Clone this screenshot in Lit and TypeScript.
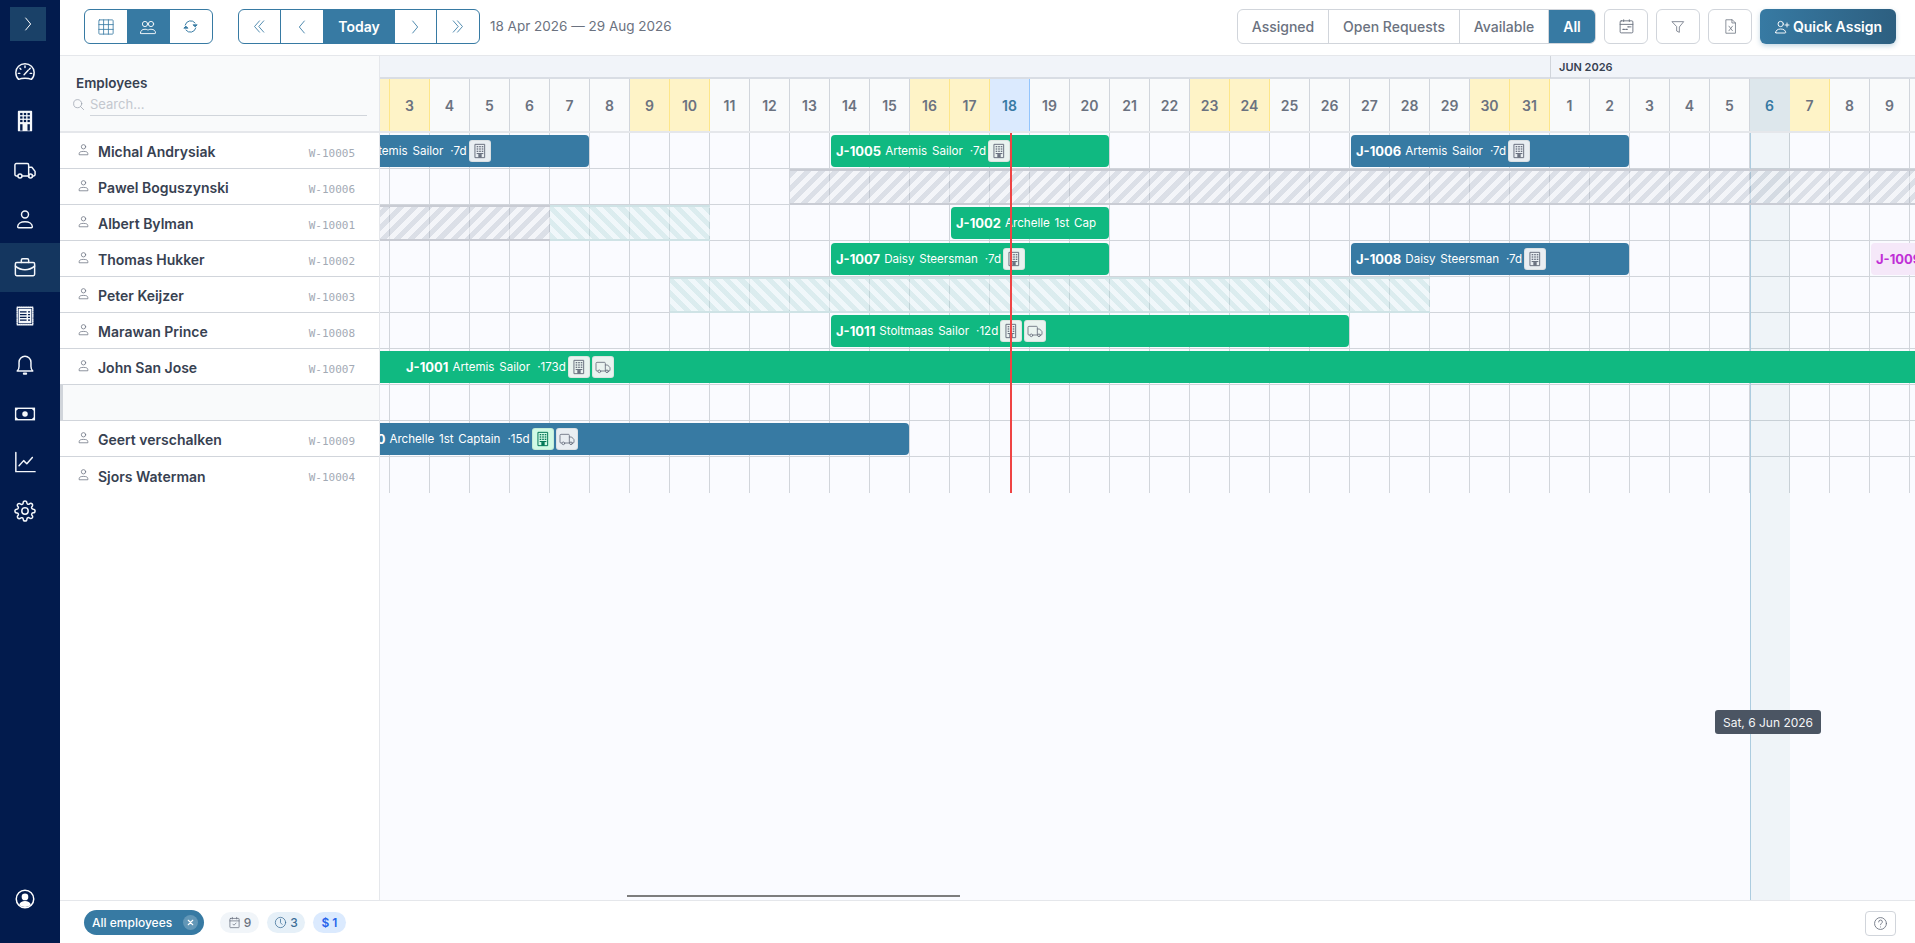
import { LitElement, html, css, svg } from "lit";
import { customElement } from "lit/decorators.js";

const ic = (body: unknown, size = 16, sw = 1.5) => html`<svg width=${size} height=${size} viewBox="0 0 24 24" fill="none" stroke="currentColor" stroke-width=${sw} stroke-linecap="round" stroke-linejoin="round">${body}</svg>`;

const I = {
  gauge: svg`<path d="M5 20c-2-1.800-3-4.500-3-7.500a10 9.500 0 0 1 20 0c0 3-1 5.700-3 7.500-2-.9-4.400-1.300-7-1.300s-5 .4-7 1.300z"/><path d="M12 5.500v1.500M6.500 8l1 1M4.800 13.500h1.500M17.700 8l-1 1M19.200 13.500h-1.500M11 15l4.500-5"/>`,
  building: svg`<rect x="5" y="1.500" width="14" height="21" fill="currentColor" stroke="currentColor"/><g fill="#021b4d" stroke="none"><rect x="6.700" y="3.200" width="2.600" height="2.400"/><rect x="10.700" y="3.200" width="2.600" height="2.400"/><rect x="14.700" y="3.200" width="2.600" height="2.400"/><rect x="6.700" y="7" width="2.600" height="2.400"/><rect x="10.700" y="7" width="2.600" height="2.400"/><rect x="14.700" y="7" width="2.600" height="2.400"/><rect x="6.700" y="10.800" width="2.600" height="2.400"/><rect x="10.700" y="10.800" width="2.600" height="2.400"/><rect x="14.700" y="10.800" width="2.600" height="2.400"/><rect x="6.700" y="15.500" width="2.600" height="7"/><rect x="14.700" y="15.500" width="2.600" height="7"/></g>`,
  truck: svg`<path d="M4 18.500H2.500a1.500 1.500 0 0 1-1.500-1.500V6.500A1.500 1.500 0 0 1 2.500 5h12A1.500 1.500 0 0 1 16 6.500v12H9"/><path d="M16 9h3.500l3.500 4.500v3.500a1.500 1.500 0 0 1-1.500 1.500H20M16 18.500h.5"/><circle cx="6.500" cy="18.500" r="2.200"/><circle cx="18" cy="18.500" r="2.200"/>`,
  person: svg`<circle cx="12" cy="7" r="3.800"/><path d="M4 20.500c0-3.500 3.500-5.500 8-5.500s8 2 8 5.500c0 .5-.4 1-1 1H5c-.6 0-1-.5-1-1z"/>`,
  briefcase: svg`<rect x="1.500" y="7" width="21" height="14.500" rx="1.500"/><path d="M8 7V4.500A1.500 1.500 0 0 1 9.500 3h5A1.500 1.500 0 0 1 16 4.500V7M1.500 11c3 2.500 6.500 4 10.500 4s7.500-1.500 10.500-4"/>`,
  invoice: svg`<rect x="3.500" y="2.500" width="17" height="19" stroke-dasharray="1 1"/><rect x="5" y="4" width="14" height="16" fill="currentColor" stroke="none"/><path d="M6.500 7.500h11M6.500 10.500h11M6.500 13.500h11M6.500 16.500h11" stroke="#021b4d" stroke-linecap="butt"/><path d="M14.500 6.500v11" stroke="currentColor"/>`,
  bell: svg`<path d="M12 2.500a6.500 6.500 0 0 0-6.500 6.500v4.500c0 2.500-1.500 4.500-2 5h17c-.5-.5-2-2.500-2-5V9A6.500 6.500 0 0 0 12 2.500z"/><path d="M10.800 21.500h2.400" stroke-width="2.400"/>`,
  cash: svg`<rect x="1" y="5" width="22" height="14" fill="currentColor" stroke="none"/><path d="M2.500 8.500l2-2h15l2 2v7l-2 2h-15l-2-2z" fill="#021b4d" stroke="none"/><circle cx="12" cy="12" r="3" fill="currentColor" stroke="none"/>`,
  chart: svg`<path d="M2 1.500v21h21M5.500 16l5-5.500 3.500 3.500 6-7"/>`,
  gear: svg`<circle cx="12" cy="12" r="3.500"/><path d="M19.400 15a1.650 1.650 0 0 0 .33 1.820l.06.06a2 2 0 0 1 0 2.830 2 2 0 0 1-2.830 0l-.06-.06a1.650 1.650 0 0 0-1.820-.33 1.650 1.650 0 0 0-1 1.510V21a2 2 0 0 1-2 2 2 2 0 0 1-2-2v-.09A1.650 1.650 0 0 0 9 19.400a1.650 1.650 0 0 0-1.820.33l-.06.06a2 2 0 0 1-2.830 0 2 2 0 0 1 0-2.830l.06-.06a1.650 1.650 0 0 0 .33-1.820 1.650 1.650 0 0 0-1.510-1H3a2 2 0 0 1-2-2 2 2 0 0 1 2-2h.09A1.650 1.650 0 0 0 4.600 9a1.650 1.650 0 0 0-.33-1.820l-.06-.06a2 2 0 0 1 0-2.830 2 2 0 0 1 2.830 0l.06.06a1.650 1.650 0 0 0 1.820.33H9a1.650 1.650 0 0 0 1-1.510V3a2 2 0 0 1 2-2 2 2 0 0 1 2 2v.09a1.650 1.650 0 0 0 1 1.510 1.650 1.650 0 0 0 1.820-.33l.06-.06a2 2 0 0 1 2.830 0 2 2 0 0 1 0 2.830l-.06.06a1.650 1.650 0 0 0-.33 1.820V9a1.650 1.650 0 0 0 1.510 1H21a2 2 0 0 1 2 2 2 2 0 0 1-2 2h-.09a1.650 1.650 0 0 0-1.510 1z"/>`,
  userCircle: svg`<circle cx="12" cy="12" r="10.500" stroke-width="1.800"/><circle cx="12" cy="9.500" r="4" fill="currentColor" stroke="none"/><path d="M5 19c1-3 3.500-4.500 7-4.500s6 1.500 7 4.500c-2 1.800-4.400 2.700-7 2.700S7 20.800 5 19z" fill="currentColor" stroke="none"/>`,
  chevR: svg`<path d="M8.500 3l7.500 9-7.500 9"/>`,
  chevL: svg`<path d="M15.500 3L8 12l7.500 9"/>`,
  dblL: svg`<path d="M12 4l-7 8 7 8M18 4l-7 8 7 8"/>`,
  dblR: svg`<path d="M6 4l7 8-7 8M12 4l7 8-7 8"/>`,
  table: svg`<rect x="2.500" y="2.500" width="19" height="19" rx="1"/><path d="M8.800 2.500v19M15.200 2.500v19M2.500 8.800h19M2.500 15.200h19"/>`,
  users: svg`<circle cx="8" cy="8" r="3.500"/><circle cx="16" cy="8" r="3.500"/><path d="M2 20c0-3 2-5 6-5 2 0 3.200.5 4 1.400.8-.9 2-1.400 4-1.400 4 0 6 2 6 5 0 .5-.3.8-.8.8H2.800c-.5 0-.8-.3-.8-.8z"/>`,
  sync: svg`<path d="M4.500 10a8 8 0 0 1 14-3M19.500 14a8 8 0 0 1-14 3"/><path d="M21 10l-2.500 2.500L16 10z" fill="currentColor"/><path d="M3 14l2.500-2.500L8 14z" fill="currentColor"/>`,
  calendar: svg`<rect x="3" y="4" width="18" height="17" rx="1.500"/><path d="M3 9h18M8 2.500V5M16 2.500V5" /><path d="M7 16h2M11 16h2M14 12.500h2M18 12.500h.1" stroke-width="2"/>`,
  filter: svg`<path d="M3.500 4h17l-6.500 8v8l-4-2v-6z"/>`,
  excel: svg`<path d="M6 2.500h8.500l4.500 4.500v14.500H6zM14 2.500V7h5"/><path d="M9.800 11.500l5 6.500M14.800 11.500l-5 6.500"/>`,
  userPlus: svg`<circle cx="10" cy="7.500" r="4"/><path d="M2.500 20.500c0-3.500 3-5.500 7.500-5.500s7.500 2 7.500 5.500c0 .3-.2.5-.5.5H3c-.3 0-.5-.2-.5-.5zM19.500 6v6M16.500 9h6"/>`,
  search: svg`<circle cx="10.500" cy="10.500" r="7.500"/><path d="M16 16l5.500 5.500"/>`,
  rowPerson: svg`<circle cx="12" cy="7" r="4"/><path d="M4 21v-1.500c0-2.500 2.500-4 8-4s8 1.500 8 4V21zM4 21"/>`,
  calCheck: svg`<rect x="3.500" y="4.500" width="17" height="17" rx="1"/><path d="M3.500 9h17M8 2.500v3M16 2.500v3M9 15l2 2 4-4"/>`,
  clock: svg`<circle cx="12" cy="12" r="9.500"/><path d="M12 6v6.500l3 3"/>`,
  help: svg`<circle cx="12" cy="12" r="9.500"/><path d="M9 9.500a3 3 0 0 1 6 0c0 2-3 2.300-3 4.500M12 17.500v.1"/>`,
  close: svg`<path d="M6 6l12 12M18 6L6 18"/>`,
  bldSmall: svg`<rect x="5" y="2" width="14" height="20" stroke="currentColor" stroke-width="1.500"/><g fill="currentColor" stroke="none"><rect x="7" y="4.500" width="2.400" height="2"/><rect x="10.800" y="4.500" width="2.400" height="2"/><rect x="14.600" y="4.500" width="2.400" height="2"/><rect x="7" y="8" width="2.400" height="2"/><rect x="10.800" y="8" width="2.400" height="2"/><rect x="14.600" y="8" width="2.400" height="2"/><rect x="7" y="11.500" width="2.400" height="2"/><rect x="10.800" y="11.500" width="2.400" height="2"/><rect x="14.600" y="11.500" width="2.400" height="2"/><rect x="7" y="15" width="10" height="1.600"/><rect x="9.500" y="16.600" width="5" height="5.400"/></g>`,
  truckSmall: svg`<path d="M4 18H3a1.500 1.500 0 0 1-1.500-1.500v-10A1.500 1.500 0 0 1 3 5h11a1.500 1.500 0 0 1 1.500 1.500V18H9"/><path d="M15.500 9H19l3.500 4v3.500A1.500 1.500 0 0 1 21 18h-1M15.500 18h.5"/><circle cx="6.500" cy="18.500" r="2"/><circle cx="18" cy="18.500" r="2"/>`,
};

const COL_COUNT = 42;
const TODAY = 18;
const HOVER = 37;
const FIRST_LABEL = 3;
const LAST_LABEL = 40;

interface Day { n: number; weekend: boolean; }
const days: Day[] = Array.from({ length: COL_COUNT }, (_, i) => {
  const d = new Date(Date.UTC(2026, 3, 30 + i));
  const wd = d.getUTCDay();
  return { n: d.getUTCDate(), weekend: wd === 0 || wd === 6 };
});

type Item =
  | { kind: "bar"; id: string; text?: string; dur?: string; start: number; span: number; color: "green" | "blue" | "purple"; chips?: ("b" | "t" | "bg")[]; pad?: number }
  | { kind: "hatch"; tone: "grey" | "teal"; start: number; span: number };

interface Row { name?: string; code?: string; items: Item[]; }

const bar = (id: string, text: string, dur: string, start: number, span: number, color: "green" | "blue" | "purple", chips: ("b" | "t" | "bg")[] = [], pad?: number): Item => ({ kind: "bar", id, text, dur, start, span, color, chips, pad });
const hatch = (tone: "grey" | "teal", start: number, span: number): Item => ({ kind: "hatch", tone, start, span });

const rows: Row[] = [
  { name: "Michal Andrysiak", code: "W-10005", items: [bar("J-1004", "Artemis Sailor", "7d", 1, 7, "blue", ["b"]), bar("J-1005", "Artemis Sailor", "7d", 14, 7, "green", ["b"]), bar("J-1006", "Artemis Sailor", "7d", 27, 7, "blue", ["b"])] },
  { name: "Pawel Boguszynski", code: "W-10006", items: [hatch("grey", 13, 29)] },
  { name: "Albert Bylman", code: "W-10001", items: [hatch("grey", 0, 7), hatch("teal", 7, 4), bar("J-1002", "Archelle 1st Cap", "", 17, 4, "green")] },
  { name: "Thomas Hukker", code: "W-10002", items: [bar("J-1007", "Daisy Steersman", "7d", 14, 7, "green", ["b"]), bar("J-1008", "Daisy Steersman", "7d", 27, 7, "blue", ["b"]), bar("J-1009", "", "", 40, 2, "purple")] },
  { name: "Peter Keijzer", code: "W-10003", items: [hatch("teal", 10, 19)] },
  { name: "Marawan Prince", code: "W-10008", items: [bar("J-1011", "Stoltmaas Sailor", "12d", 14, 13, "green", ["b", "t"])] },
  { name: "John San Jose", code: "W-10007", items: [bar("J-1001", "Artemis Sailor", "173d", 0, 42, "green", ["b", "t"], 135)] },
  { items: [] },
  { name: "Geert verschalken", code: "W-10009", items: [bar("J-1010", "Archelle 1st Captain", "15d", 1, 15, "blue", ["bg", "t"], 32)] },
  { name: "Sjors Waterman", code: "W-10004", items: [] },
];

const navIcons = [I.gauge, I.building, I.truck, I.person, I.briefcase, I.invoice, I.bell, I.cash, I.chart, I.gear];

@customElement("app-root")
export class AppRoot extends LitElement {
  static styles = css`
    :host { display: grid; grid-template-columns: 60px 1fr; height: 943px; width: 1915px; overflow: hidden; font-family: Inter, "Noto Sans", sans-serif; color: #374151; background: #fff; }
    svg { display: block; flex: none; }
    .side { background: #021b4d; color: #fff; display: flex; flex-direction: column; }
    .toggle { width: 36px; height: 34px; margin: 7px 0 7px 10px; background: #1a4168; display: flex; align-items: center; justify-content: center; }
    .nav { height: 48.75px; display: flex; align-items: center; padding-left: 14px; color: #f4f7fb; }
    .nav.on { background: #14365f; }
    .navuser { margin-top: auto; margin-bottom: 34px; padding-left: 15px; color: #fff; }
    .main { display: flex; flex-direction: column; min-width: 0; }
    .top { height: 56px; box-sizing: border-box; border-bottom: 1px solid #e5e7eb; display: flex; align-items: flex-start; padding: 9px 19px 0 24px; }
    .seg { display: flex; height: 35px; border: 1px solid #377aa3; border-radius: 6px; overflow: hidden; box-sizing: border-box; background: #fff; }
    .seg .b { display: flex; align-items: center; justify-content: center; color: #377aa3; }
    .seg .on { background: #377aa3; color: #fff; }
    .g1 .b { width: 42.330px; }
    .g2 { margin-left: 25px; }
    .g2 .b { width: 42px; border-right: 1px solid #377aa3; box-sizing: border-box; }
    .g2 .b.t { width: 72px; font-size: 14px; font-weight: 600; border-right: 0; }
    .g2 .b:last-child { border-right: 0; }
    .g2 .b.p { border-right: 0; }
    .range { margin-left: 10px; font-size: 13.500px; color: #6b7280; line-height: 35px; }
    .filters { margin-left: auto; display: flex; height: 35px; border: 1px solid #d1d5db; border-radius: 6px; overflow: hidden; box-sizing: border-box; font-size: 14px; font-weight: 500; color: #6b7280; }
    .filters div { display: flex; align-items: center; justify-content: center; border-right: 1px solid #d1d5db; box-sizing: border-box; }
    .filters .f1 { width: 91px; } .filters .f2 { width: 131px; } .filters .f3 { width: 89px; }
    .filters .all { width: 46px; background: #377aa3; color: #fff; font-weight: 600; border-right: 0; }
    .ibtn { width: 44px; height: 35px; margin-left: 8px; border: 1px solid #d1d5db; border-radius: 6px; box-sizing: border-box; display: flex; align-items: center; justify-content: center; color: #6b7280; }
    .quick { width: 136px; height: 35px; margin-left: 8px; border-radius: 6px; background: linear-gradient(90deg, #377aa3, #2d5f80); color: #fff; font-size: 14px; font-weight: 600; display: flex; align-items: center; justify-content: center; gap: 3px; box-shadow: 0 2px 5px rgba(55, 122, 163, .3); }
    .content { flex: 1; display: grid; grid-template-columns: 320px 1fr; min-height: 0; }
    .left { border-right: 1px solid #e5e7eb; display: flex; flex-direction: column; background: #fff; box-sizing: border-box; }
    .lh { height: 77px; box-sizing: border-box; background: #f9fafb; border-bottom: 2px solid #e5e7eb; padding: 18px 12px 0 12px; display: flex; flex-direction: column; }
    .lh .t { font-size: 13.500px; font-weight: 600; line-height: 18px; margin-left: 4px; color: #374151; }
    .sr { display: flex; align-items: center; gap: 5px; margin-top: 1px; color: #9ca3af; }
    .sr input { flex: 1; min-width: 0; border: 0; border-bottom: 1px solid #d1d5db; background: transparent; height: 22px; padding: 0; font: 13px Inter, sans-serif; outline: none; }
    .sr input::placeholder { color: #c4c8cf; }
    .er { height: 36px; box-sizing: border-box; border-bottom: 1px solid #d1d5db; display: flex; align-items: center; padding: 2px 24px 0 17px; font-size: 14px; font-weight: 600; color: #374151; }
    .er.last { border-bottom: 0; }
    .er.blank { background: #f9fafb; border-left: 3px solid #d1d5db; border-bottom-color: #d1d5db; }
    .er .pi { color: #6b7280; margin-right: 8px; margin-top: -4px; }
    .er .nm { flex: 1; }
    .er .cd { font: 400 11px "DejaVu Sans Mono", monospace; color: #a3aab5; margin-top: 3px; }
    .tl { overflow: hidden; display: flex; flex-direction: column; min-width: 0; background: #fafbff; }
    .inner { margin-left: -110px; width: 1680px; flex: 1; display: flex; flex-direction: column; }
    .mrow { height: 23px; box-sizing: border-box; display: grid; grid-template-columns: 1280px 1fr; background: #f1f4f9; border-bottom: 2px solid #d9dde4; font-size: 11px; font-weight: 600; color: #374151; }
    .mrow .m { border-left: 1px solid #d1d5db; padding-left: 8px; line-height: 22px; }
    .drow { height: 54px; box-sizing: border-box; display: grid; grid-template-columns: repeat(42, 40px); border-bottom: 2px solid #e5e7eb; background: #f9fafb; }
    .d { border-right: 1px solid #d1d5db; display: flex; align-items: center; justify-content: center; font-size: 14px; font-weight: 600; color: #6b7280; box-sizing: border-box; }
    .d.we { background: #fef3c7; border-right-color: #fde68a; }
    .d.today { background: #dbeafe; border-right-color: #93c5fd; color: #377aa3; }
    .d.hov { background: #dde7ec; color: #377aa3; border-right-color: #dde7ec; }
    .body { flex: 1; position: relative; }
    .row { height: 36px; box-sizing: border-box; border-bottom: 1px solid #d1d5db; display: grid; grid-template-columns: repeat(42, 40px); grid-template-rows: 35px; background-image: repeating-linear-gradient(90deg, transparent 0 39px, #d1d5db 39px 40px); }
    .row.last { border-bottom: 0; height: 36px; grid-template-rows: 36px; }
    .bar { grid-row: 1; margin: 2px 1px 1px; border-radius: 4px; display: flex; align-items: center; overflow: hidden; color: #fff; white-space: nowrap; padding-left: 5px; font-size: 11.600px; min-width: 0; position: relative; z-index: 1; }
    .bar.green { background: #10b981; }
    .bar.blue { background: #377aa3; }
    .bar.purple { background: #f5e8f9; color: #c02fd6; }
    .bar b { font-size: 13px; font-weight: 700; }
    .bar .n { margin-left: 4px; word-spacing: 1.500px; }
    .bar .du { margin-left: 7px; }
    .chip { width: 22px; height: 22px; box-sizing: border-box; border-radius: 3px; margin-left: 2px; background: #eaf3f0; border: 1px solid rgba(0, 0, 0, .06); color: #6b7280; display: flex; align-items: center; justify-content: center; }
    .blue .chip { background: #e9eef2; }
    .chip.bg { background: #d1fae5; color: #047857; }
    .chip:first-of-type { margin-left: 4px; }
    .hatch { grid-row: 1; box-sizing: border-box; margin-bottom: -1px; position: relative; z-index: 1; }
    .hatch.grey { background: repeating-linear-gradient(135deg, rgba(160, 170, 185, .34) 0 5px, rgba(238, 240, 244, .55) 5px 10px); border-top: 2px solid #c9ccd4; border-bottom: 2px solid #c9ccd4; }
    .hatch.teal { background: repeating-linear-gradient(45deg, rgba(165, 210, 210, .36) 0 5px, rgba(232, 244, 246, .55) 5px 10px); border-top: 2px solid #cfe3e6; border-bottom: 2px solid #cfe3e6; }
    .over { position: absolute; top: 0; bottom: 0; width: 40px; box-sizing: border-box; background: rgba(55, 122, 135, .055); border-left: 1px solid #acccdf; pointer-events: none; }
    .now { position: absolute; top: 0; width: 2px; height: 360px; background: #ef4444; pointer-events: none; z-index: 2; }
    .tip { position: absolute; left: 1445px; top: 577px; width: 106px; height: 24px; border-radius: 3px; background: #4b5563; color: #f3f4f6; font-size: 12px; display: flex; align-items: center; justify-content: center; z-index: 3; }
    .thumb { position: absolute; left: 357px; top: 762px; width: 333px; height: 2px; background: #7d7d7d; }
    .foot { height: 43px; box-sizing: border-box; border-top: 1px solid #e5e7eb; display: flex; align-items: flex-start; padding: 9px 19px 0 24px; }
    .pill { width: 120px; height: 25px; border-radius: 13px; background: #377aa3; color: #fff; font-size: 12px; font-weight: 500; display: flex; align-items: center; padding-left: 8px; box-sizing: border-box; justify-content: space-between; padding-right: 6px; }
    .pill .x { width: 15px; height: 15px; border-radius: 50%; background: rgba(255, 255, 255, .22); display: flex; align-items: center; justify-content: center; }
    .fc { height: 21px; margin-top: 2px; border-radius: 11px; display: flex; align-items: center; justify-content: center; gap: 3px; font-size: 12px; font-weight: 500; box-sizing: border-box; }
    .fc.a { width: 39px; margin-left: 16px; background: #f1f5f9; color: #6b7280; }
    .fc.c { width: 38px; margin-left: 8px; background: #e6f0f8; color: #3b6e97; }
    .fc.e { width: 33px; margin-left: 8px; background: #dbeafe; color: #2563eb; font-weight: 600; }
    .help { margin-left: auto; margin-top: 1px; width: 31px; height: 25px; border: 1px solid #d1d5db; border-radius: 4px; box-sizing: border-box; display: flex; align-items: center; justify-content: center; color: #6b7280; }
  `;

  private renderItem(it: Item) {
    const col = `grid-column:${it.start + 1} / span ${it.span}`;
    if (it.kind === "hatch") return html`<div class="hatch ${it.tone}" style=${col}></div>`;
    const style = it.pad ? `${col};padding-left:${it.pad}px` : col;
    return html`<div class="bar ${it.color}" style=${style}>
      <b>${it.id}</b>
      ${it.text ? html`<span class="n">${it.text}</span>` : ""}
      ${it.dur ? html`<span class="du">·${it.dur}</span>` : ""}
      ${(it.chips ?? []).map((c) => html`<span class="chip ${c === "bg" ? "bg" : ""}">${c === "t" ? ic(I.truckSmall, 16, 1.3) : ic(I.bldSmall, 16, 1)}</span>`)}
    </div>`;
  }

  render() {
    return html`
      <aside class="side">
        <div class="toggle">${ic(I.chevR, 16)}</div>
        ${navIcons.map((n, i) => html`<div class="nav ${i === 4 ? "on" : ""}">${ic(n, 22, 1.6)}</div>`)}
        <div class="navuser">${ic(I.userCircle, 20)}</div>
      </aside>
      <div class="main">
        <header class="top">
          <div class="seg g1">
            <div class="b">${ic(I.table, 18, 1.1)}</div>
            <div class="b on">${ic(I.users, 18, 1.2)}</div>
            <div class="b">${ic(I.sync, 17, 1.4)}</div>
          </div>
          <div class="seg g2">
            <div class="b">${ic(I.dblL, 17, 1.2)}</div>
            <div class="b p">${ic(I.chevL, 16, 1.3)}</div>
            <div class="b t on">Today</div>
            <div class="b">${ic(I.chevR, 16, 1.3)}</div>
            <div class="b">${ic(I.dblR, 17, 1.2)}</div>
          </div>
          <div class="range">18 Apr 2026 — 29 Aug 2026</div>
          <div class="filters">
            <div class="f1">Assigned</div>
            <div class="f2">Open Requests</div>
            <div class="f3">Available</div>
            <div class="all">All</div>
          </div>
          <div class="ibtn">${ic(I.calendar, 17, 1.3)}</div>
          <div class="ibtn">${ic(I.filter, 16, 1.2)}</div>
          <div class="ibtn">${ic(I.excel, 17, 1.1)}</div>
          <div class="quick">${ic(I.userPlus, 16, 1.4)}<span>Quick Assign</span></div>
        </header>
        <div class="content">
          <section class="left">
            <div class="lh">
              <div class="t">Employees</div>
              <div class="sr">${ic(I.search, 13, 1.4)}<input placeholder="Search..." /></div>
            </div>
            ${rows.map((r, i) => r.name
              ? html`<div class="er ${i === rows.length - 1 ? "last" : ""}">
                  <span class="pi">${ic(I.rowPerson, 13, 1.4)}</span>
                  <span class="nm">${r.name}</span>
                  <span class="cd">${r.code}</span>
                </div>`
              : html`<div class="er blank"></div>`)}
          </section>
          <section class="tl">
            <div class="inner">
              <div class="mrow"><span></span><span class="m">JUN 2026</span></div>
              <div class="drow">
                ${days.map((d, i) => html`<div class="d ${d.weekend && i !== HOVER ? "we" : ""} ${i === TODAY ? "today" : ""} ${i === HOVER ? "hov" : ""}">${i >= FIRST_LABEL && i <= LAST_LABEL ? d.n : ""}</div>`)}
              </div>
              <div class="body">
                <div class="over" style="left:${HOVER * 40}px"></div>
                ${rows.map((r, i) => html`<div class="row ${i === rows.length - 1 ? "last" : ""}">${r.items.map((it) => this.renderItem(it))}</div>`)}
                <div class="now" style="left:${TODAY * 40 + 20}px"></div>
                <div class="tip">Sat, 6 Jun 2026</div>
                <div class="thumb"></div>
              </div>
            </div>
          </section>
        </div>
        <footer class="foot">
          <div class="pill"><span>All employees</span><span class="x">${ic(I.close, 9, 3)}</span></div>
          <div class="fc a">${ic(I.calCheck, 13, 1.4)}<span>9</span></div>
          <div class="fc c">${ic(I.clock, 13, 1.4)}<span>3</span></div>
          <div class="fc e"><span>$</span><span>1</span></div>
          <div class="help">${ic(I.help, 15, 1.4)}</div>
        </footer>
      </div>
    `;
  }
}
